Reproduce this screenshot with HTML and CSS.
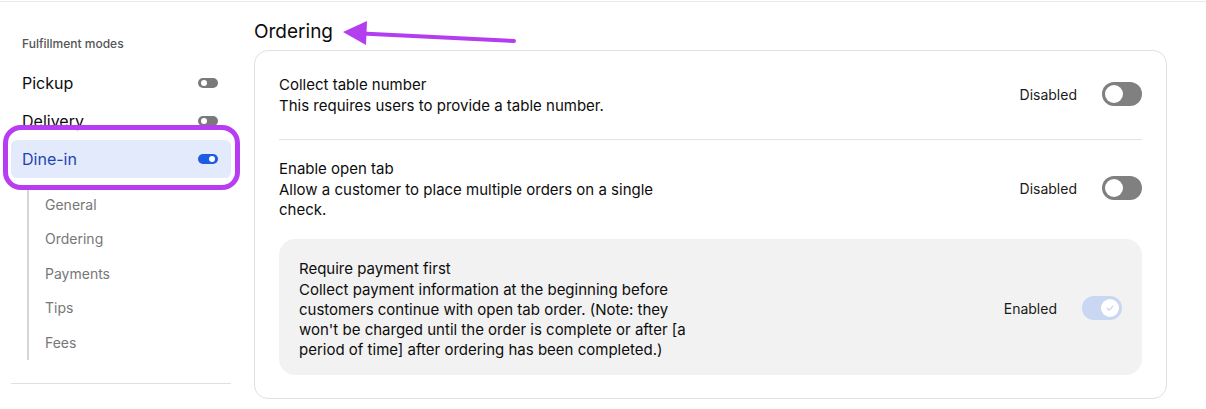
FILE: index.html
```html
<!DOCTYPE html>
<html lang="en">
<head>
<meta charset="utf-8">
<title>Ordering</title>
<link rel="stylesheet" href="styles.css">
</head>
<body>
<div class="page">
  <aside class="sidebar">
    <div class="group-label">Fulfillment modes</div>
    <div class="mode"><span>Pickup</span><span class="mini-toggle"></span></div>
    <div class="mode"><span>Delivery</span><span class="mini-toggle"></span></div>
    <div class="mode active"><span>Dine-in</span><span class="mini-toggle on"></span></div>
    <ul class="subnav">
      <li>General</li>
      <li>Ordering</li>
      <li>Payments</li>
      <li>Tips</li>
      <li>Fees</li>
    </ul>
    <div class="sep"></div>
    <div class="annot-box"></div>
  </aside>
  <main class="content">
    <h2 class="title">Ordering</h2>
    <section class="card">
      <div class="setting">
        <div class="setting-text">
          <div class="setting-title">Collect table number</div>
          <div class="setting-desc">This requires users to provide a table number.</div>
        </div>
        <div class="setting-control"><span class="state">Disabled</span><span class="toggle"></span></div>
      </div>
      <div class="setting divided">
        <div class="setting-text">
          <div class="setting-title">Enable open tab</div>
          <div class="setting-desc">Allow a customer to place multiple orders on a single check.</div>
        </div>
        <div class="setting-control"><span class="state">Disabled</span><span class="toggle"></span></div>
      </div>
      <div class="setting nested">
        <div class="setting-text">
          <div class="setting-title">Require payment first</div>
          <div class="setting-desc">Collect payment information at the beginning before customers continue with open tab order. (Note: they won't be charged until the order is complete or after [a period of time] after ordering has been completed.)</div>
        </div>
        <div class="setting-control"><span class="state">Enabled</span><span class="toggle on"><span class="knob"><svg viewBox="0 0 12 12" width="10" height="10"><path d="M2.5 6.2 L5 8.5 L9.5 3.8" fill="none" stroke="#c3d2f0" stroke-width="1.4" stroke-linecap="round" stroke-linejoin="round"/></svg></span></span></div>
      </div>
    </section>
  </main>
  <svg class="annot-arrow" width="1206" height="60" viewBox="0 0 1206 60">
    <line x1="514" y1="41" x2="362" y2="33.5" stroke="#b23ef0" stroke-width="4" stroke-linecap="round"/>
    <polygon points="343,32 367,21 366,45" fill="#b23ef0"/>
  </svg>
</div>
</body>
</html>
```
FILE: styles.css
```css
* { box-sizing: border-box; }
html, body { margin: 0; padding: 0; background: #fff; }
body {
  font-family: Inter, "Noto Sans", "Liberation Sans", sans-serif;
  color: #0d0d0d;
}
.page {
  position: relative;
  display: flex;
  margin-top: 1px;
  border-top: 1px solid #e8e8e8;
  min-height: 407px;
}
.sidebar {
  position: relative;
  width: 242px;
  padding: 35px 11px 0 11px;
  flex: none;
}
.group-label {
  font-size: 12px;
  line-height: 14px;
  font-weight: 500;
  color: #555;
  padding-left: 11px;
  margin-bottom: 13px;
}
.mode {
  height: 38px;
  display: flex;
  align-items: center;
  justify-content: space-between;
  padding: 0 13px 0 11px;
  font-size: 16px;
  font-weight: 400;
  color: #0d0d0d;
  border-radius: 6px;
}
.mode.active {
  background: #e3eafb;
  color: #1b45b3;
}
.mini-toggle {
  position: relative;
  width: 20px;
  height: 10px;
  border-radius: 5px;
  background: #7a7a7a;
}
.mini-toggle::after {
  content: "";
  position: absolute;
  top: 2px;
  left: 3px;
  width: 6px;
  height: 6px;
  border-radius: 50%;
  background: #fff;
}
.mini-toggle.on { background: #1d5be3; }
.mini-toggle.on::after { left: 11px; }
.subnav {
  list-style: none;
  margin: 8px 0 0 16px;
  padding: 2px 0 0 0;
  border-left: 2px solid #d6d6d6;
}
.subnav li {
  padding-left: 16px;
  font-size: 14px;
  line-height: 34.4px;
  color: #777;
}
.sep {
  margin-top: 23px;
  border-top: 1px solid #e0e0e0;
}
.annot-box {
  position: absolute;
  left: 3px;
  top: 123px;
  width: 237px;
  height: 65px;
  border: 5px solid #b73cf2;
  border-radius: 18px;
}
.content {
  flex: 1;
  padding: 18px 39px 0 12px;
}
.title {
  margin: 0 0 6px 0;
  font-size: 19px;
  line-height: 24px;
  font-weight: 400;
  color: #0d0d0d;
}
.card {
  border: 1px solid #e0e0e0;
  border-radius: 14px;
  padding: 23px 24px 23px 24px;
}
.setting {
  display: flex;
  align-items: center;
  justify-content: space-between;
  padding-bottom: 23px;
}
.setting.divided {
  border-top: 1px solid #e3e3e3;
  padding: 18px 0 19px 0;
}
.setting.nested {
  background: #f2f2f2;
  border-radius: 16px;
  padding: 19px 20px 15px 20px;
}
.setting-text { max-width: 400px; }
.setting-title {
  font-size: 15px;
  line-height: 22px;
  font-weight: 400;
}
.setting-desc {
  font-size: 15px;
  line-height: 20px;
}
.setting-control {
  display: flex;
  align-items: center;
  gap: 25px;
  margin-top: -2px;
}
.state {
  font-size: 14px;
  color: #1a1a1a;
}
.toggle {
  position: relative;
  display: flex;
  align-items: center;
  width: 40px;
  height: 24px;
  border-radius: 12px;
  background: #808080;
}
.toggle::after {
  content: "";
  position: absolute;
  left: 3px;
  top: 3px;
  width: 18px;
  height: 18px;
  border-radius: 50%;
  background: #fff;
}
.toggle.on { background: #c9d7f2; }
.toggle.on::after { display: none; }
.knob {
  position: absolute;
  right: 3px;
  top: 3px;
  width: 18px;
  height: 18px;
  border-radius: 50%;
  background: #fff;
  display: flex;
  align-items: center;
  justify-content: center;
}
.annot-arrow {
  position: absolute;
  left: 0;
  top: -2px;
  pointer-events: none;
}
```
